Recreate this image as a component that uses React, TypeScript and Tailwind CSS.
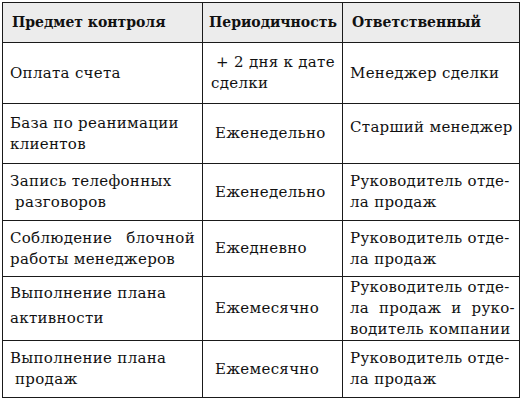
const font = { fontFamily: "'DejaVu Serif', 'Liberation Serif', serif" };

type Cell = { lines: string[]; justify?: number[]; cls?: string };

const Lines = ({ lines, justify = [], cls = "" }: Cell) => (
  <div className={cls}>
    {lines.map((l, i) => (
      <div
        key={i}
        className={
          justify.includes(i)
            ? "whitespace-normal text-justify [text-align-last:justify]"
            : "whitespace-pre"
        }
      >
        {l}
      </div>
    ))}
  </div>
);

const rows: { h: string; c: Cell[] }[] = [
  {
    h: "h-[61px]",
    c: [
      { lines: ["Оплата счета"] },
      { lines: [" + 2 дня к дате", "сделки"] },
      { lines: ["Менеджер сделки"] },
    ],
  },
  {
    h: "h-[60px]",
    c: [
      { lines: ["База по реанимации", "клиентов"] },
      { lines: ["Еженедельно"], cls: "pl-[4px]" },
      { lines: ["Старший менеджер"], cls: "-mt-[12px]" },
    ],
  },
  {
    h: "h-[57px]",
    c: [
      { lines: ["Запись телефонных", " разговоров"] },
      { lines: ["Еженедельно"], cls: "pl-[4px]" },
      { lines: ["Руководитель отде-", "ла продаж"] },
    ],
  },
  {
    h: "h-[56px]",
    c: [
      { lines: ["Соблюдение блочной", "работы менеджеров"], justify: [0] },
      { lines: ["Ежедневно"], cls: "pl-[4px]" },
      { lines: ["Руководитель отде-", "ла продаж"] },
    ],
  },
  {
    h: "h-[64px]",
    c: [
      { lines: ["Выполнение плана", "активности"], cls: "leading-[25px] -mt-[6px]" },
      { lines: ["Ежемесячно"], cls: "pl-[4px]" },
      { lines: ["Руководитель отде-", "ла продаж и руко-", "водитель компании"], justify: [1] },
    ],
  },
  {
    h: "h-[57px]",
    c: [
      { lines: ["Выполнение плана", " продаж"] },
      { lines: ["Ежемесячно"], cls: "pl-[4px]" },
      { lines: ["Руководитель отде-", "ла продаж"] },
    ],
  },
];

const td = "border border-[#1a1a1a] align-middle";

export default function App() {
  return (
    <div className="w-[526px] h-[401px] bg-white pt-[2px] pl-[2px]" style={font}>
      <table className="border-collapse table-fixed text-[15px] leading-[21px] tracking-[0.3px] text-[#111]">
        <colgroup>
          <col className="w-[200px]" />
          <col className="w-[140px]" />
          <col className="w-[177px]" />
        </colgroup>
        <thead>
          <tr className="h-[40px] bg-[#ececec] text-[14px] tracking-normal">
            <th className={td + " text-left font-bold pl-[9px]"}>Предмет контроля</th>
            <th className={td + " text-left font-bold pl-[6px]"}>Периодичность</th>
            <th className={td + " text-left font-bold pl-[9px]"}>Ответственный</th>
          </tr>
        </thead>
        <tbody>
          {rows.map((r, i) => (
            <tr key={i} className={r.h}>
              <td className={td + " pl-[7px] pr-[7px]"}>
                <Lines {...r.c[0]} />
              </td>
              <td className={td + " pl-[8px] pr-[2px]"}>
                <Lines {...r.c[1]} />
              </td>
              <td className={td + " pl-[7px] pr-[4px]"}>
                <Lines {...r.c[2]} />
              </td>
            </tr>
          ))}
        </tbody>
      </table>
    </div>
  );
}
